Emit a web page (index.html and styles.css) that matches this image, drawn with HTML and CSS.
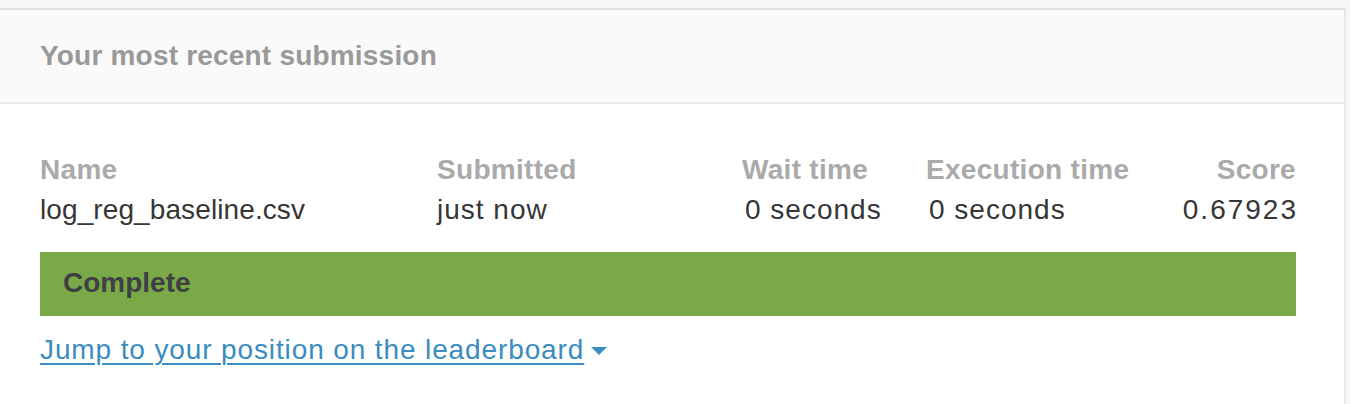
FILE: index.html
```html
<!DOCTYPE html>
<html lang="en">
<head>
<meta charset="utf-8">
<title>Your most recent submission</title>
<link rel="stylesheet" href="styles.css">
</head>
<body>
<div class="page">
  <section class="card">
    <header class="card-header">Your most recent submission</header>
    <div class="card-body">
      <div class="sub-table">
        <div class="th">Name</div>
        <div class="th">Submitted</div>
        <div class="th">Wait time</div>
        <div class="th">Execution time</div>
        <div class="th right">Score</div>
        <div class="td file">log_reg_baseline.csv</div>
        <div class="td">just now</div>
        <div class="td time">0 seconds</div>
        <div class="td time">0 seconds</div>
        <div class="td right score">0.67923</div>
      </div>
      <div class="status">Complete</div>
      <div class="jump">
        <a class="jump-link" href="#">Jump to your position on the leaderboard</a>
        <svg class="caret" width="16" height="9" viewBox="0 0 16 9" aria-hidden="true"><path d="M0 0 L16 0 L8 8 Z" fill="#3b8cc0"/></svg>
      </div>
    </div>
  </section>
</div>
</body>
</html>
```
FILE: styles.css
```css
* { box-sizing: border-box; }
html, body { margin: 0; padding: 0; }
body {
  background: #f6f7f9;
  font-family: "Liberation Sans", Arial, Helvetica, sans-serif;
  font-size: 28px;
  color: #3a3a3a;
}
.page {
  padding-top: 8px;
  height: 404px;
  overflow: hidden;
}
.card {
  width: 1346px;
  background: #fff;
  border-top: 2px solid #dddee0;
  border-right: 2px solid #e8e8e8;
  min-height: 400px;
}
.card-header {
  height: 94px;
  display: flex;
  align-items: center;
  padding-left: 40px;
  background: #fafafa;
  border-bottom: 2px solid #ebebeb;
  color: #999;
  font-weight: bold;
  font-size: 28px;
  letter-spacing: 0.2px;
}
.card-body {
  padding: 46px 48px 0 40px;
}
.sub-table {
  display: grid;
  grid-template-columns: 397px 305px 184px 1fr auto;
  line-height: 40px;
}
.th {
  color: #aaa;
  font-weight: bold;
  letter-spacing: 0.3px;
}
.td {
  color: #363636;
  letter-spacing: 1px;
}
.td.file { letter-spacing: 0.1px; }
.td.time { padding-left: 3px; }
.td.score {
  letter-spacing: 2px;
  margin-right: -2px;
}
.right { text-align: right; }
.status {
  margin-top: 22px;
  height: 64px;
  line-height: 62px;
  background: #7aa947;
  color: #3f4046;
  font-weight: bold;
  padding-left: 23px;
}
.jump {
  margin-top: 14px;
  line-height: 40px;
  display: flex;
  align-items: center;
}
.jump-link {
  color: #3b8cc0;
  text-decoration: underline;
  text-decoration-thickness: 2px;
  text-underline-offset: 4px;
  letter-spacing: 0.88px;
}
.caret {
  margin-left: 7px;
  margin-top: 2px;
}
```
